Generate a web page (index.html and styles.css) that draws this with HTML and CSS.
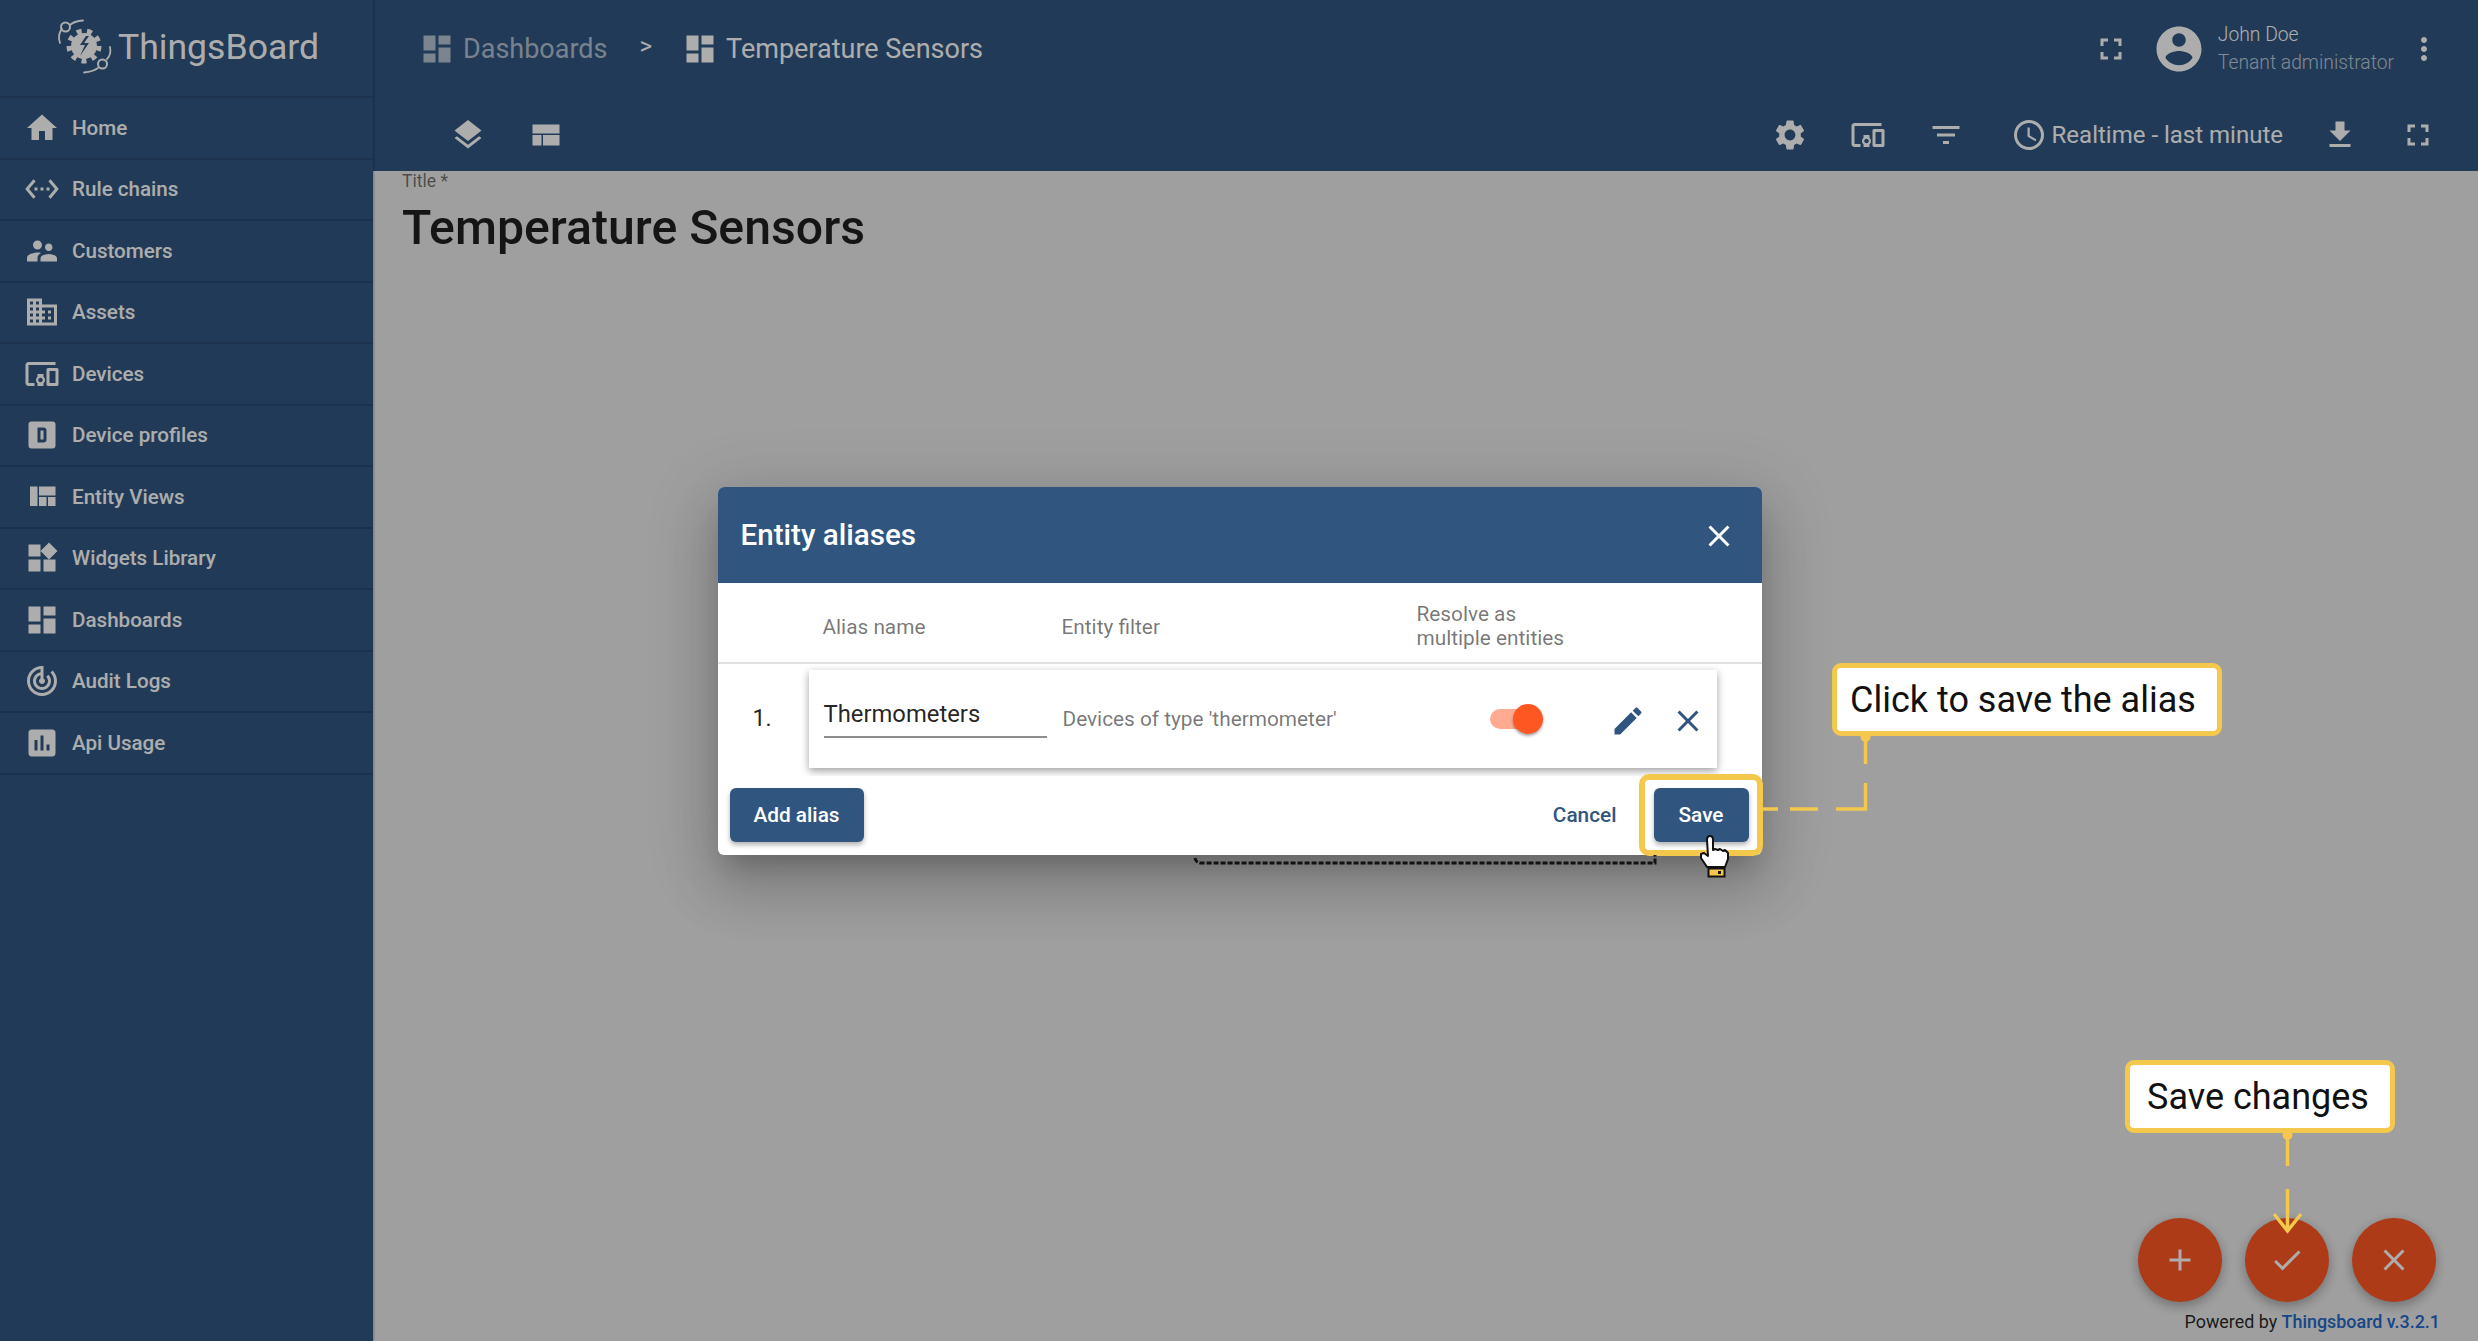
FILE: index.html
```html
<!DOCTYPE html>
<html lang="en">
<head>
<meta charset="utf-8">
<title>ThingsBoard - Temperature Sensors</title>
<link rel="stylesheet" href="styles.css">
</head>
<body>
<div class="app">
  <aside class="sidebar">
    <div class="brand">
      <svg class="logo" viewBox="0 0 54 54">
        <circle class="logo-teeth" cx="27" cy="26" r="15"/>
        <circle class="logo-gear" cx="27" cy="26" r="13"/>
        <path class="logo-bolt" d="M29 16l-6 9h5l-5 11 9-13h-5l5-7z"/>
        <path class="logo-arc" d="M3 23C1 18 2 12 5 9"/>
        <circle class="logo-node" cx="8.500" cy="7" r="4.500"/>
        <path class="logo-arc" d="M13 5C16 2 20 1 26 .5"/>
        <path class="logo-arc" d="M53 27c1 5 0 9-3 12"/>
        <circle class="logo-node" cx="45.500" cy="44" r="4.500"/>
        <path class="logo-arc" d="M41 48c-4 3-8 4-14 4.500"/>
      </svg>
      <span class="brand-name">ThingsBoard</span>
    </div>
    <nav class="nav">
      <a class="nav-item"><svg class="icon" viewBox="0 0 24 24"><path d="M10 20v-6h4v6h5v-8h3L12 3 2 12h3v8z"/></svg><span>Home</span></a>
      <a class="nav-item"><svg class="icon" viewBox="0 0 24 24"><path d="M7.770 6.760L6.230 5.480.82 12l5.410 6.520 1.540-1.280L3.420 12l4.350-5.240zM7 13h2v-2H7v2zm10-2h-2v2h2v-2zm-6 2h2v-2h-2v2zm6.770-7.520l-1.540 1.280L20.580 12l-4.350 5.240 1.540 1.280L23.180 12l-5.410-6.520z"/></svg><span>Rule chains</span></a>
      <a class="nav-item"><svg class="icon" viewBox="0 0 24 24"><path d="M16.500 12c1.380 0 2.490-1.120 2.490-2.500S17.880 7 16.500 7C15.120 7 14 8.120 14 9.500s1.120 2.500 2.500 2.500zM9 11c1.660 0 2.990-1.340 2.990-3S10.660 5 9 5C7.340 5 6 6.340 6 8s1.340 3 3 3zm7.500 3c-1.830 0-5.500.92-5.500 2.750V19h11v-2.250c0-1.830-3.670-2.750-5.500-2.750zM9 13c-2.330 0-7 1.170-7 3.500V19h7v-2.250c0-.85.33-2.340 2.370-3.470C10.500 13.100 9.660 13 9 13z"/></svg><span>Customers</span></a>
      <a class="nav-item"><svg class="icon" viewBox="0 0 24 24"><path d="M12 7V3H2v18h20V7H12zM6 19H4v-2h2v2zm0-4H4v-2h2v2zm0-4H4V9h2v2zm0-4H4V5h2v2zm4 12H8v-2h2v2zm0-4H8v-2h2v2zm0-4H8V9h2v2zm0-4H8V5h2v2zm10 12h-8v-2h2v-2h-2v-2h2v-2h-2V9h8v10zm-2-8h-2v2h2v-2zm0 4h-2v2h2v-2z"/></svg><span>Assets</span></a>
      <a class="nav-item"><svg class="icon" viewBox="0 0 24 24"><path d="M3 6h18V4H3c-1.100 0-2 .9-2 2v12c0 1.100.9 2 2 2h4v-2H3V6zm10 6H9v1.780c-.61.55-1 1.330-1 2.220s.39 1.670 1 2.220V20h4v-1.780c.61-.55 1-1.340 1-2.220s-.39-1.670-1-2.220V12zm-2 5.500c-.83 0-1.500-.67-1.500-1.500s.67-1.500 1.500-1.500 1.500.67 1.500 1.500-.67 1.500-1.500 1.500zM22 8h-6c-.5 0-1 .5-1 1v10c0 .5.5 1 1 1h6c.5 0 1-.5 1-1V9c0-.5-.5-1-1-1zm-1 10h-4v-8h4v8z"/></svg><span>Devices</span></a>
      <a class="nav-item"><svg class="icon" viewBox="0 0 24 24"><path fill-rule="evenodd" d="M9 7v10h4a2 2 0 0 0 2-2V9a2 2 0 0 0-2-2H9zm2 2h2v6h-2V9zM5 3h14a2 2 0 0 1 2 2v14a2 2 0 0 1-2 2H5a2 2 0 0 1-2-2V5a2 2 0 0 1 2-2z"/></svg><span>Device profiles</span></a>
      <a class="nav-item"><svg class="icon" viewBox="0 0 24 24"><path d="M10 18h5v-6h-5v6zm-6 0h5V5H4v13zm12 0h5v-6h-5v6zM10 5v6h11V5H10z"/></svg><span>Entity Views</span></a>
      <a class="nav-item"><svg class="icon" viewBox="0 0 24 24"><path d="M13 13v8h8v-8h-8zM3 21h8v-8H3v8zM3 3v8h8V3H3zm13.660-1.310L11 7.340 16.660 13l5.660-5.660-5.660-5.650z"/></svg><span>Widgets Library</span></a>
      <a class="nav-item"><svg class="icon" viewBox="0 0 24 24"><path d="M3 13h8V3H3v10zm0 8h8v-6H3v6zm10 0h8V11h-8v10zm0-18v6h8V3h-8z"/></svg><span>Dashboards</span></a>
      <a class="nav-item"><svg class="icon" viewBox="0 0 24 24"><path d="M19.070 4.930l-1.410 1.410C19.100 7.790 20 9.790 20 12c0 4.420-3.580 8-8 8s-8-3.580-8-8c0-4.080 3.050-7.440 7-7.930v2.020C8.160 6.570 6 9.030 6 12c0 3.310 2.690 6 6 6s6-2.690 6-6c0-1.660-.67-3.160-1.760-4.240l-1.410 1.410C15.550 9.900 16 10.900 16 12c0 2.210-1.790 4-4 4s-4-1.790-4-4c0-1.860 1.280-3.410 3-3.860v2.140c-.6.35-1 .98-1 1.720 0 1.100.9 2 2 2s2-.9 2-2c0-.74-.4-1.380-1-1.720V2h-1C6.480 2 2 6.480 2 12s4.480 10 10 10 10-4.480 10-10c0-2.760-1.120-5.260-2.930-7.070z"/></svg><span>Audit Logs</span></a>
      <a class="nav-item"><svg class="icon" viewBox="0 0 24 24"><path d="M19 3H5c-1.100 0-2 .9-2 2v14c0 1.100.9 2 2 2h14c1.100 0 2-.9 2-2V5c0-1.100-.9-2-2-2zM9 17H7v-7h2v7zm4 0h-2V7h2v10zm4 0h-2v-4h2v4z"/></svg><span>Api Usage</span></a>
    </nav>
  </aside>

  <main class="main">
    <header class="toolbar">
      <div class="toolbar-top">
        <svg class="icon crumb-dim" viewBox="0 0 24 24"><path d="M3 13h8V3H3v10zm0 8h8v-6H3v6zm10 0h8V11h-8v10zm0-18v6h8V3h-8z"/></svg>
        <span class="crumb crumb-dim">Dashboards</span>
        <span class="crumb-sep">&gt;</span>
        <svg class="icon" viewBox="0 0 24 24"><path d="M3 13h8V3H3v10zm0 8h8v-6H3v6zm10 0h8V11h-8v10zm0-18v6h8V3h-8z"/></svg>
        <span class="crumb">Temperature Sensors</span>
        <svg class="icon top-fullscreen" viewBox="0 0 24 24"><path d="M7 14H5v5h5v-2H7v-3zm-2-4h2V7h3V5H5v5zm12 7h-3v2h5v-5h-2v3zM14 5v2h3v3h2V5h-5z"/></svg>
        <svg class="avatar" viewBox="0 0 24 24"><path d="M12 2C6.480 2 2 6.480 2 12s4.480 10 10 10 10-4.480 10-10S17.520 2 12 2zm0 3c1.660 0 3 1.340 3 3s-1.340 3-3 3-3-1.340-3-3 1.340-3 3-3zm0 14.200c-2.500 0-4.710-1.280-6-3.220.03-1.990 4-3.080 6-3.080 1.990 0 5.970 1.090 6 3.080-1.290 1.940-3.500 3.220-6 3.220z"/></svg>
        <div class="user">
          <span class="user-name">John Doe</span>
          <span class="user-role">Tenant administrator</span>
        </div>
        <svg class="icon more" viewBox="0 0 24 24"><path d="M12 8c1.100 0 2-.9 2-2s-.9-2-2-2-2 .9-2 2 .9 2 2 2zm0 2c-1.100 0-2 .9-2 2s.9 2 2 2 2-.9 2-2-.9-2-2-2zm0 6c-1.100 0-2 .9-2 2s.9 2 2 2 2-.9 2-2-.9-2-2-2z"/></svg>
      </div>
      <div class="toolbar-bottom">
        <svg class="icon" viewBox="0 0 24 24"><path d="M11.990 18.540l-7.370-5.730L3 14.070l9 7 9-7-1.630-1.270-7.380 5.740zM12 16l7.360-5.730L21 9l-9-7-9 7 1.630 1.270L12 16z"/></svg>
        <svg class="icon" viewBox="0 0 24 24"><path d="M3 5h18v6H3zM3 12h6v7H3zM10 12h11v7H10z"/></svg>
        <svg class="icon tools-start" viewBox="0 0 24 24"><path d="M19.140 12.940c.04-.3.06-.61.06-.94 0-.32-.02-.64-.07-.94l2.030-1.580c.18-.14.23-.41.12-.61l-1.920-3.320c-.12-.22-.37-.29-.59-.22l-2.390.96c-.5-.38-1.030-.7-1.620-.94l-.36-2.540c-.04-.24-.24-.41-.48-.41h-3.840c-.24 0-.43.17-.47.41l-.36 2.540c-.59.24-1.130.57-1.620.94l-2.390-.96c-.22-.08-.47 0-.59.22L2.740 8.870c-.12.21-.08.47.12.61l2.030 1.580c-.05.3-.09.63-.09.94s.02.64.07.94l-2.030 1.580c-.18.14-.23.41-.12.61l1.920 3.320c.12.22.37.29.59.22l2.390-.96c.5.38 1.030.7 1.620.94l.36 2.540c.05.24.24.41.48.41h3.840c.24 0 .44-.17.47-.41l.36-2.540c.59-.24 1.130-.56 1.620-.94l2.390.96c.22.08.47 0 .59-.22l1.920-3.320c.12-.22.07-.47-.12-.61l-2.010-1.580zM12 15.600c-1.980 0-3.600-1.620-3.600-3.600s1.620-3.600 3.600-3.600 3.600 1.620 3.600 3.600-1.620 3.600-3.600 3.600z"/></svg>
        <svg class="icon" viewBox="0 0 24 24"><path d="M3 6h18V4H3c-1.100 0-2 .9-2 2v12c0 1.100.9 2 2 2h4v-2H3V6zm10 6H9v1.780c-.61.55-1 1.330-1 2.220s.39 1.670 1 2.220V20h4v-1.780c.61-.55 1-1.340 1-2.220s-.39-1.670-1-2.220V12zm-2 5.500c-.83 0-1.500-.67-1.500-1.500s.67-1.500 1.500-1.500 1.500.67 1.500 1.500-.67 1.500-1.500 1.500zM22 8h-6c-.5 0-1 .5-1 1v10c0 .5.5 1 1 1h6c.5 0 1-.5 1-1V9c0-.5-.5-1-1-1zm-1 10h-4v-8h4v8z"/></svg>
        <svg class="icon" viewBox="0 0 24 24"><path d="M10 18h4v-2h-4v2zM3 6v2h18V6H3zm3 7h12v-2H6v2z"/></svg>
        <div class="timewindow">
          <svg class="icon" viewBox="0 0 24 24"><path d="M11.990 2C6.470 2 2 6.480 2 12s4.470 10 9.990 10C17.520 22 22 17.520 22 12S17.520 2 11.990 2zM12 20c-4.420 0-8-3.580-8-8s3.580-8 8-8 8 3.580 8 8-3.580 8-8 8zm.5-13H11v6l5.250 3.150.75-1.230-4.500-2.670z"/></svg>
          <span>Realtime - last minute</span>
        </div>
        <svg class="icon" viewBox="0 0 24 24"><path d="M19 9h-4V3H9v6H5l7 7 7-7zM5 18v2h14v-2H5z"/></svg>
        <svg class="icon" viewBox="0 0 24 24"><path d="M7 14H5v5h5v-2H7v-3zm-2-4h2V7h3V5H5v5zm12 7h-3v2h5v-5h-2v3zM14 5v2h3v3h2V5h-5z"/></svg>
      </div>
    </header>
    <section class="content">
      <label class="title-label">Title *</label>
      <h1 class="title">Temperature Sensors</h1>
      <footer class="powered">Powered by <a class="powered-link">Thingsboard v.3.2.1</a></footer>
    </section>
  </main>
</div>

<div class="fabs">
  <button class="fab"><svg class="icon" viewBox="0 0 24 24"><path d="M19 13h-6v6h-2v-6H5v-2h6V5h2v6h6v2z"/></svg></button>
  <button class="fab"><svg class="icon" viewBox="0 0 24 24"><path d="M9 16.170L4.830 12l-1.420 1.410L9 19 21 7l-1.410-1.410z"/></svg></button>
  <button class="fab"><svg class="icon" viewBox="0 0 24 24"><path d="M19 6.410L17.590 5 12 10.590 6.410 5 5 6.410 10.590 12 5 17.590 6.410 19 12 13.410 17.590 19 19 17.590 13.410 12z"/></svg></button>
</div>

<div class="backdrop">
  <div class="modal">
    <div class="modal-head">
      <h2 class="modal-title">Entity aliases</h2>
      <svg class="icon modal-close" viewBox="0 0 24 24"><path d="M19 6.410L17.590 5 12 10.590 6.410 5 5 6.410 10.590 12 5 17.590 6.410 19 12 13.410 17.590 19 19 17.590 13.410 12z"/></svg>
    </div>
    <div class="cols">
      <span class="col-alias">Alias name</span>
      <span class="col-filter">Entity filter</span>
      <span class="col-resolve">Resolve as<br>multiple entities</span>
    </div>
    <div class="rows">
      <div class="row">
        <span class="row-num">1.</span>
        <div class="card">
          <span class="alias-input">Thermometers</span>
          <span class="filter-text">Devices of type 'thermometer'</span>
          <span class="toggle"><span class="toggle-thumb"></span></span>
          <svg class="icon row-edit" viewBox="0 0 24 24"><path d="M3 17.250V21h3.750L17.810 9.940l-3.750-3.750L3 17.250zM20.710 7.040c.39-.39.39-1.020 0-1.410l-2.340-2.340c-.39-.39-1.020-.39-1.410 0l-1.830 1.830 3.750 3.750 1.830-1.830z"/></svg>
          <svg class="icon row-close" viewBox="0 0 24 24"><path d="M19 6.410L17.590 5 12 10.590 6.410 5 5 6.410 10.590 12 5 17.590 6.410 19 12 13.410 17.590 19 19 17.590 13.410 12z"/></svg>
        </div>
      </div>
    </div>
    <div class="modal-foot">
      <button class="btn btn-add">Add alias</button>
      <button class="btn-text">Cancel</button>
      <button class="btn btn-save">Save</button>
    </div>
  </div>
</div>

<div class="highlight"></div>
<div class="callout callout-alias">Click to save the alias</div>
<div class="callout callout-changes">Save changes</div>
<svg class="annotations" viewBox="0 0 2478 1341">
  <path class="dotted" d="M1195 858q1 5 6 5H1655v-8"/>
  <circle class="yellow-dot" cx="1865.500" cy="737" r="5"/>
  <path class="yellow-line" d="M1865.500 737V764M1865.500 783V809H1836M1818 809H1790M1778 809H1763"/>
  <circle class="yellow-dot" cx="2287.500" cy="1135" r="5"/>
  <path class="yellow-line" d="M2287.500 1135V1166M2287.500 1189V1231M2274 1214L2287.500 1231L2301 1214"/>
  <g class="hand">
    <path class="hand-fill" d="M1707 867l-6-9v-4l3-1 4 3-1-16q0-4 3-4t3 4v10l2-1 3 1 2-1 3 2 2-1 3 3v6l-3 8z"/>
    <path class="cuff" d="M1708.500 868.500h16v8h-16z"/>
    <path class="cuff-dot" d="M1718 871h3v3h-3z"/>
  </g>
</svg>
</body>
</html>
```
FILE: styles.css
```css
* { box-sizing: border-box; }
html, body { margin: 0; padding: 0; width: 2478px; height: 1341px; overflow: hidden; }
body { position: relative; font-family: Roboto, "Liberation Sans", sans-serif; background: #ebebeb; color: rgba(0,0,0,.87); }
button { font-family: inherit; border: 0; cursor: pointer; padding: 0; }
a { color: inherit; text-decoration: none; }

.icon { width: 36px; height: 36px; fill: currentColor; flex: none; display: block; }

.app { display: grid; grid-template-columns: 373px 1fr; width: 2478px; height: 1341px; }

.sidebar { background: #305680; color: #fff; box-shadow: 1px 0 2px rgba(0,0,0,.25); position: relative; z-index: 1; }
.brand { height: 98px; display: flex; align-items: center; padding-left: 57px; gap: 7px; border-bottom: 2px solid rgba(0,0,0,.12); }
.logo { width: 54px; height: 54px; flex: none; overflow: visible; margin-bottom: 2px; }
.logo-gear { fill: #fff; }
.logo-teeth { fill: none; stroke: #fff; stroke-width: 5; stroke-dasharray: 5 5.470; }
.logo-bolt { fill: #305680; }
.logo-arc { fill: none; stroke: #fff; stroke-width: 1.800; stroke-linecap: round; }
.logo-node { fill: none; stroke: #fff; stroke-width: 2; }
.brand-name { font-size: 35.600px; font-weight: 400; line-height: 1; }
.nav { display: flex; flex-direction: column; }
.nav-item { height: 61.500px; display: flex; align-items: center; padding-left: 24px; gap: 12px; font-size: 20.600px; font-weight: 500; border-bottom: 2px solid rgba(0,0,0,.12); }

.main { display: flex; flex-direction: column; min-width: 0; }
.toolbar { height: 171px; background: #305680; color: #fff; flex: none; }
.toolbar-top { height: 98px; display: flex; align-items: center; padding: 0 36px 0 46px; }
.crumb { font-size: 27px; font-weight: 400; margin-left: 8px; }
.crumb-dim { color: rgba(255,255,255,.65); }
.crumb-sep { font-size: 24px; margin: -6px 30px 0 32px; }
.top-fullscreen { margin-left: auto; }
.avatar { width: 54px; height: 54px; fill: currentColor; margin: 0 12px 0 23px; flex: none; }
.user { display: flex; flex-direction: column; gap: 9px; margin-top: -2px; font-size: 19.300px; font-weight: 300; line-height: 19px; }
.user-role { color: rgba(255,255,255,.7); }
.more { margin-left: 12px; }
.toolbar-bottom { height: 73px; display: flex; align-items: center; gap: 42px; padding: 0 42px 0 77px; }
.tools-start { margin-left: auto; }
.timewindow { display: flex; align-items: center; gap: 5px; font-size: 24px; margin: 0 -3px 0 5px; }

.content { flex: 1; display: flex; flex-direction: column; padding: 0 0 0 29px; }
.title-label { font-size: 17.600px; line-height: 20px; color: rgba(0,0,0,.54); }
.title { margin: 9px 0 0; font-size: 48.200px; font-weight: 500; line-height: 56px; }
.powered { margin-top: auto; align-self: flex-end; padding: 0 38px 9px 0; font-size: 17.900px; line-height: 20px; color: rgba(0,0,0,.85); }
.powered-link { color: #2468c8; font-weight: 500; }

.fabs { position: absolute; right: 42px; top: 1218px; display: flex; gap: 23px; z-index: 2; }
.fab { width: 84px; height: 84px; border-radius: 50%; background: #ff5722; color: #fff; display: flex; align-items: center; justify-content: center; box-shadow: 0 4px 12px rgba(0,0,0,.3); }

.backdrop { position: absolute; inset: 0; padding-left: 1px; background: rgba(0,0,0,.32); display: flex; align-items: center; justify-content: center; z-index: 3; }
.modal { width: 1044px; height: 368px; background: #fff; border-radius: 6px; display: flex; flex-direction: column; box-shadow: 0 16px 22px -10px rgba(0,0,0,.2), 0 34px 54px 4px rgba(0,0,0,.14), 0 13px 66px 12px rgba(0,0,0,.12); }
.modal-head { height: 96px; background: #305680; color: #fff; border-radius: 6px 6px 0 0; display: flex; align-items: center; justify-content: space-between; padding: 0 25px 0 23px; flex: none; }
.modal-title { margin: 0; font-size: 29.600px; font-weight: 500; }
.modal-close { margin-top: 2px; }
.cols { height: 81px; display: flex; align-items: center; padding-left: 105px; font-size: 20.800px; line-height: 24px; color: rgba(0,0,0,.54); border-bottom: 2px solid #e0e0e0; flex: none; }
.col-alias { width: 239px; padding-top: 10px; }
.col-filter { width: 355px; padding-top: 10px; }
.col-resolve { padding-top: 8px; }
.rows { height: 112px; padding-top: 6px; overflow: hidden; flex: none; }
.row { display: flex; align-items: center; }
.row-num { width: 91px; padding-left: 35px; font-size: 23px; }
.card { width: 908px; height: 98px; display: flex; align-items: center; padding-left: 15px; background: #fff; box-shadow: 0 3px 8px rgba(0,0,0,.38); }
.alias-input { width: 223px; height: 53px; margin-bottom: 15px; padding-top: 15px; font-size: 23.800px; line-height: 28px; border-bottom: 2px solid #8e8e8e; color: rgba(0,0,0,.87); }
.filter-text { margin-left: 16px; font-size: 20.800px; color: rgba(0,0,0,.54); }
.toggle { position: relative; width: 48px; height: 20px; margin-left: 153px; border-radius: 10px; background: #ffab91; }
.toggle-thumb { position: absolute; right: -5px; top: -5px; width: 30px; height: 30px; border-radius: 50%; background: #ff5722; box-shadow: 0 2px 3px rgba(0,0,0,.35); }
.row-edit, .row-close { color: #305680; margin-top: 4px; }
.row-edit { margin-left: 72px; }
.row-close { margin-left: 24px; }
.modal-foot { flex: 1; display: flex; align-items: flex-start; padding: 12px 13px 0 12px; }
.btn { height: 54px; border-radius: 6px; background: #305680; color: #fff; font-size: 20.800px; font-weight: 500; box-shadow: 0 3px 5px rgba(0,0,0,.3); }
.btn-add { width: 134px; }
.btn-save { width: 95px; }
.btn-text { height: 54px; margin: 0 37px 0 auto; background: none; color: #305680; font-size: 20.800px; font-weight: 500; }

.highlight { position: absolute; left: 1639px; top: 774px; width: 124px; height: 82px; border: 6px solid #f4c84d; border-radius: 10px; box-shadow: inset 0 0 5px rgba(255,255,255,.9); z-index: 4; }
.callout { position: absolute; display: flex; align-items: center; background: #fff; border: 5px solid #f4c84d; border-radius: 9px; color: #111; font-size: 36px; z-index: 4; white-space: nowrap; }
.callout-alias { left: 1832px; top: 663px; width: 390px; height: 73px; padding-left: 13px; }
.callout-changes { left: 2125px; top: 1060px; width: 270px; height: 73px; padding-left: 17px; }
.annotations { position: absolute; left: 0; top: 0; width: 2478px; height: 1341px; z-index: 5; pointer-events: none; }
.yellow-line { fill: none; stroke: #f4c84d; stroke-width: 3.500; }
.yellow-dot { fill: #f4c84d; }
.dotted { fill: none; stroke: #111; stroke-width: 3; stroke-dasharray: 5 2; }
.hand-fill { fill: #fff; stroke: #111; stroke-width: 2; stroke-linejoin: round; }
.cuff { fill: #f4c84d; stroke: #111; stroke-width: 2; }
.cuff-dot { fill: #111; }
```
